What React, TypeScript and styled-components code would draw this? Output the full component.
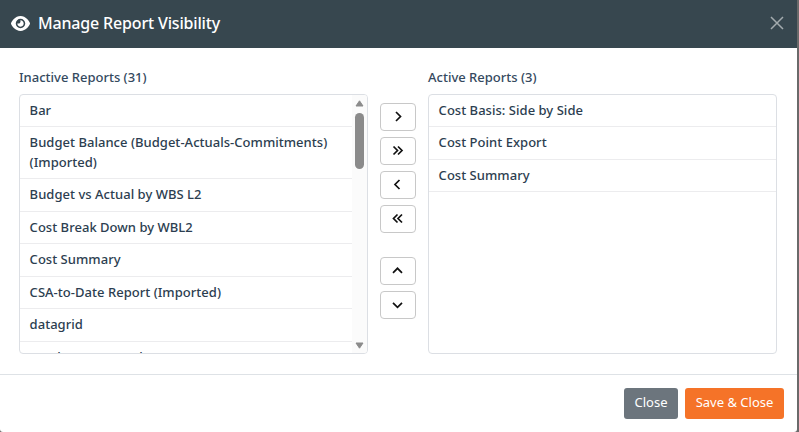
import { FC } from "react";
import styled, { createGlobalStyle } from "styled-components";
import { FaEye } from "react-icons/fa6";

const inactiveReports = [
  "Bar",
  "Budget Balance (Budget-Actuals-Commitments) (Imported)",
  "Budget vs Actual by WBS L2",
  "Cost Break Down by WBL2",
  "Cost Summary",
  "CSA-to-Date Report (Imported)",
  "datagrid",
  "Employee General",
];

const activeReports = [
  "Cost Basis: Side by Side",
  "Cost Point Export",
  "Cost Summary",
];

const moveButtons = [
  { label: "Activate", path: "M5 1 L9.5 5.5 L5 10" },
  { label: "Activate all", path: "M2.5 1.5 L6.5 5.5 L2.5 9.5 M7 1.5 L11 5.5 L7 9.5" },
  { label: "Deactivate", path: "M8.5 1 L4 5.5 L8.5 10" },
  { label: "Deactivate all", path: "M6.5 1.5 L2.5 5.5 L6.5 9.5 M11 1.5 L7 5.5 L11 9.5" },
];

const orderButtons = [
  { label: "Move up", path: "M2 7.8 L6.5 3.3 L11 7.8" },
  { label: "Move down", path: "M2 3.9 L6.5 8.4 L11 3.9" },
];

interface ArrowButtonProps {
  label: string;
  path: string;
}

const ArrowButton: FC<ArrowButtonProps> = (props) => {
  const { label, path } = props;
  return (
    <TransferButton aria-label={label}>
      <svg width="14" height="12" viewBox="0 0 14 12" fill="none">
        <path d={path} stroke="#111111" strokeWidth="1.7" />
      </svg>
    </TransferButton>
  );
};

const App: FC = () => {
  return (
    <>
      <GlobalStyle />
      <Backdrop>
        <Dialog>
          <DialogHeader>
            <FaEye size={19} />
            <DialogTitle>Manage Report Visibility</DialogTitle>
            <CloseIcon aria-label="Dismiss">
              <svg width="14" height="14" viewBox="0 0 14 14">
                <path
                  d="M1 1 L13 13 M13 1 L1 13"
                  stroke="#a3abae"
                  strokeWidth="1.5"
                />
              </svg>
            </CloseIcon>
          </DialogHeader>
          <DialogBody>
            <ReportColumn>
              <ColumnTitle>Inactive Reports (31)</ColumnTitle>
              <ReportBox>
                <ReportList>
                  {inactiveReports.map((item) => (
                    <ReportEntry key={item}>{item}</ReportEntry>
                  ))}
                </ReportList>
                <ScrollTrack>
                  <svg width="9" height="7" viewBox="0 0 9 7">
                    <path d="M4.5 0.8 L8 6 H1 Z" fill="#8b8b8b" stroke="#8b8b8b" strokeLinejoin="round" />
                  </svg>
                  <ScrollThumb />
                  <svg width="9" height="7" viewBox="0 0 9 7">
                    <path d="M4.5 6.2 L8 1 H1 Z" fill="#8b8b8b" stroke="#8b8b8b" strokeLinejoin="round" />
                  </svg>
                </ScrollTrack>
              </ReportBox>
            </ReportColumn>
            <ButtonColumn>
              <ButtonGroup>
                {moveButtons.map((item) => (
                  <ArrowButton key={item.label} {...item} />
                ))}
              </ButtonGroup>
              <ButtonGroup>
                {orderButtons.map((item) => (
                  <ArrowButton key={item.label} {...item} />
                ))}
              </ButtonGroup>
            </ButtonColumn>
            <ReportColumn>
              <ColumnTitle>Active Reports (3)</ColumnTitle>
              <ReportBox>
                <ReportList>
                  {activeReports.map((item) => (
                    <ReportEntry key={item}>{item}</ReportEntry>
                  ))}
                </ReportList>
              </ReportBox>
            </ReportColumn>
          </DialogBody>
          <DialogFooter>
            <FooterButton $color="#6c757d" $width={54}>
              Close
            </FooterButton>
            <FooterButton $color="#f57328" $width={99}>
              Save &amp; Close
            </FooterButton>
          </DialogFooter>
        </Dialog>
      </Backdrop>
    </>
  );
};

export default App;

const GlobalStyle = createGlobalStyle`
  * {
    box-sizing: border-box;
  }
  body {
    margin: 0;
    overflow: hidden;
    font-family: "Noto Sans", sans-serif;
    font-size: 13px;
    font-weight: 500;
    line-height: 19.5px;
    color: #34495e;
  }
`;

const Backdrop = styled.div`
  height: 432px;
  padding-right: 2px;
  background: #6a6a6a;
`;

const Dialog = styled.div`
  height: 432px;
  display: flex;
  flex-direction: column;
  background: #ffffff;
  border-radius: 0 0 3px 3px;
`;

const DialogHeader = styled.div`
  height: 48px;
  display: flex;
  align-items: center;
  padding: 0 13px 2px 11px;
  background: #37474f;
  color: #ffffff;
`;

const DialogTitle = styled.h5`
  flex: 1;
  margin: 0 0 0 8px;
  font-size: 16px;
  font-weight: 500;
  line-height: 24px;
  letter-spacing: -0.17px;
`;

const CloseIcon = styled.button`
  display: flex;
  padding: 0 0 1px;
  border: none;
  background: none;
`;

const DialogBody = styled.div`
  height: 326px;
  display: flex;
  padding: 20px 20px 0 19px;
`;

const ReportColumn = styled.div`
  width: 349px;
`;

const ColumnTitle = styled.div`
  height: 26px;
`;

const ReportBox = styled.div`
  height: 260px;
  display: flex;
  overflow: hidden;
  border: 1px solid #dcdfe4;
  border-radius: 4px;
`;

const ReportList = styled.div`
  flex: 1;
  margin-top: -0.25px;
  color: #2c3e50;
`;

const ReportEntry = styled.div`
  padding: 6px 9.6px;
  border-bottom: 1px solid #ececee;
  letter-spacing: 0.03px;
`;

const ScrollTrack = styled.div`
  width: 15px;
  display: flex;
  flex-direction: column;
  align-items: center;
  padding: 5px 0 4px;
  background: #fbfbfb;
`;

const ScrollThumb = styled.div`
  width: 9px;
  height: 56px;
  margin: 6px 0 auto;
  border-radius: 5px;
  background: #8b8b8b;
`;

const ButtonColumn = styled.div`
  display: flex;
  flex-direction: column;
  gap: 24px;
  padding: 35px 12px 0;
`;

const ButtonGroup = styled.div`
  display: flex;
  flex-direction: column;
  gap: 6px;
`;

const TransferButton = styled.button`
  width: 36px;
  height: 28px;
  display: flex;
  align-items: center;
  justify-content: center;
  padding: 0;
  border: 1px solid #c8c8c8;
  border-radius: 4px;
  background: #ffffff;
`;

const DialogFooter = styled.div`
  flex: 1;
  display: flex;
  align-items: flex-start;
  justify-content: flex-end;
  gap: 7px;
  padding: 13px 13px 0;
  border-top: 1px solid #dee2e6;
`;

const FooterButton = styled.button<{ $color: string; $width: number }>`
  width: ${(props) => props.$width}px;
  height: 31px;
  padding: 0 0 3px;
  border: none;
  border-radius: 3px;
  background: ${(props) => props.$color};
  color: #ffffff;
  font-family: inherit;
  font-size: 13px;
  font-weight: 400;
`;
